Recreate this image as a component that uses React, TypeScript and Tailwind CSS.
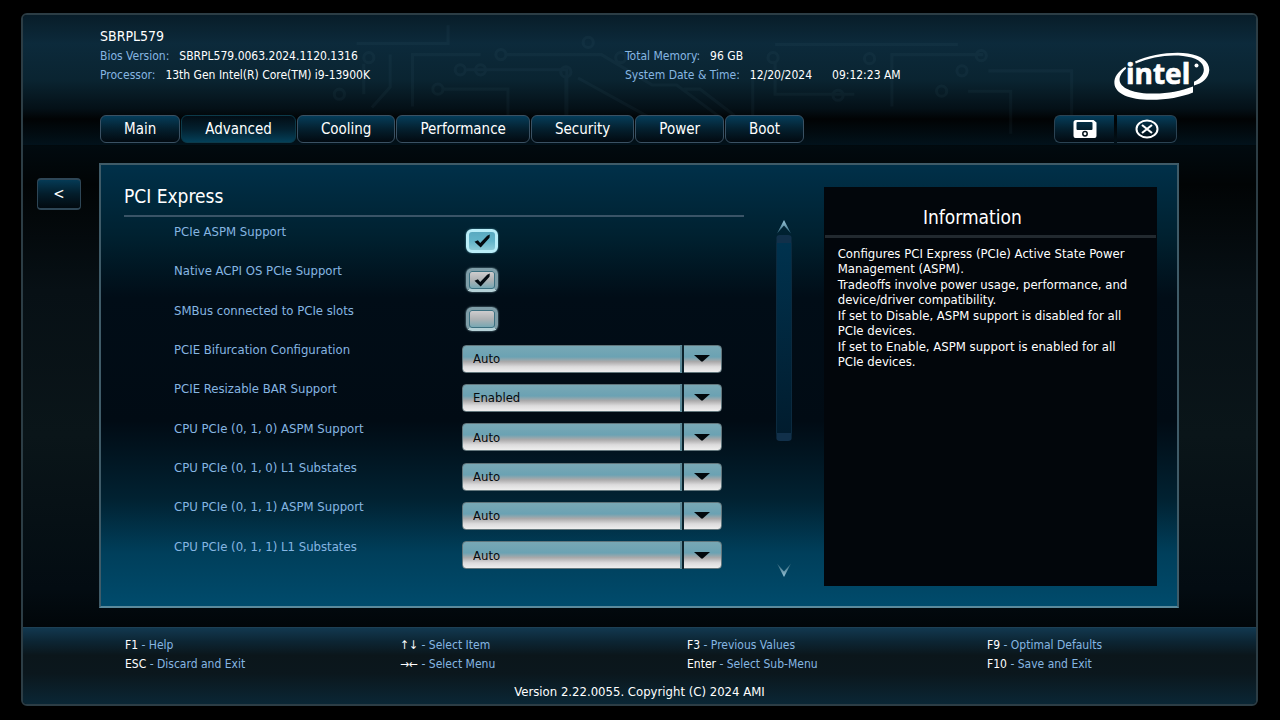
import React, { useState } from 'react';

interface CheckRow {
  id: string;
  label: string;
  kind: 'check';
  checked: boolean;
  active?: boolean;
}

interface SelectRow {
  id: string;
  label: string;
  kind: 'select';
  value: string;
}

type Row = CheckRow | SelectRow;

const TABS = ['Main', 'Advanced', 'Cooling', 'Performance', 'Security', 'Power', 'Boot'];

const ROWS: Row[] = [
  { id: 'aspm', label: 'PCIe ASPM Support', kind: 'check', checked: true, active: true },
  { id: 'acpi', label: 'Native ACPI OS PCIe Support', kind: 'check', checked: true },
  { id: 'smbus', label: 'SMBus connected to PCIe slots', kind: 'check', checked: false },
  { id: 'bifurcation', label: 'PCIE Bifurcation Configuration', kind: 'select', value: 'Auto' },
  { id: 'bar', label: 'PCIE Resizable BAR Support', kind: 'select', value: 'Enabled' },
  { id: 'cpu010-aspm', label: 'CPU PCIe (0, 1, 0) ASPM Support', kind: 'select', value: 'Auto' },
  { id: 'cpu010-l1', label: 'CPU PCIe (0, 1, 0) L1 Substates', kind: 'select', value: 'Auto' },
  { id: 'cpu011-aspm', label: 'CPU PCIe (0, 1, 1) ASPM Support', kind: 'select', value: 'Auto' },
  { id: 'cpu011-l1', label: 'CPU PCIe (0, 1, 1) L1 Substates', kind: 'select', value: 'Auto' },
];

const HELP = [
  'Configures PCI Express (PCIe) Active State Power Management (ASPM).',
  'Tradeoffs involve power usage, performance, and device/driver compatibility.',
  'If set to Disable, ASPM support is disabled for all PCIe devices.',
  'If set to Enable, ASPM support is enabled for all PCIe devices.',
];

const KEYS = [
  [['F1', 'Help'], ['ESC', 'Discard and Exit']],
  [['↑↓', 'Select Item'], ['→←', 'Select Menu']],
  [['F3', 'Previous Values'], ['Enter', 'Select Sub-Menu']],
  [['F9', 'Optimal Defaults'], ['F10', 'Save and Exit']],
];

const IntelLogo: React.FC = () => (
  <svg width="96" height="48" viewBox="0 0 96 48" fill="#fff" role="img" aria-label="intel">
    <path d="M21 9.600C36 2.500 58-.6 74 1.400c14 1.900 22 8.600 21.200 17.400C94.500 26.500 88 31.500 80 33.500v-3.800c5.500-2.600 9.500-6.700 9.800-11.500C90.300 9.800 82 5.400 69 3.900 54 2.300 37 4.800 21.800 11.600z" />
    <path d="M11.500 14.800C4 19.500 0 25.300.4 31.200.9 41.500 15 47.800 37 47.800c16 0 30.500-2.600 42-7.300v-5.900C67 39.200 54 41.600 41 41.600 20.500 41.800 7.500 36.500 5.800 29.400c-.9-4 1.200-8.400 6.200-12.600z" />
    <text
      x="12"
      y="32"
      fontFamily="Open Sans, Noto Sans, sans-serif"
      fontWeight="700"
      fontSize="28"
      stroke="#fff"
      strokeWidth="0.700"
    >
      intel
    </text>
    <circle cx="82.500" cy="13.500" r="2" />
  </svg>
);

// Faint board traces behind the header text
const Circuit: React.FC = () => (
  <svg
    className="pointer-events-none absolute inset-0 h-full w-full opacity-5"
    viewBox="0 0 1233 128"
    preserveAspectRatio="xMidYMin slice"
    fill="none"
    stroke="#6fa0b4"
    strokeWidth="3"
    aria-hidden="true"
  >
    <path d="M371 39v32l-18 20M393 90V39h67M485 39h94l50 30h24l46 34M446 54h99v58M424 73h63v38M544 62v48M556 62l76 42M660 73h16l34 26M728 110V60M750 46v32h78M865 90V39h90M960 55h82v58M940 75h42v42" />
    <path d="M428 10v18h-90M750 29h180M345 78v-30" />
    <circle cx="460" cy="54" r="5" />
    <circle cx="418" cy="73" r="5" />
    <circle cx="440" cy="54" r="5" />
    <circle cx="480" cy="39" r="5" />
    <circle cx="544" cy="56" r="5" />
    <circle cx="566" cy="27" r="5" />
    <circle cx="598" cy="42" r="5" />
    <circle cx="321" cy="78" r="5" />
    <circle cx="350" cy="42" r="5" />
    <circle cx="748" cy="42" r="5" />
    <circle cx="812" cy="79" r="5" />
    <circle cx="843" cy="43" r="5" />
    <circle cx="953" cy="40" r="5" />
    <circle cx="934" cy="55" r="5" />
    <circle cx="914" cy="75" r="5" />
  </svg>
);

const Checkbox: React.FC<{ row: CheckRow }> = ({ row }) => {
  const [checked, setChecked] = useState(row.checked);
  return (
    <div className="relative ml-1 h-6 w-8">
      <input
        id={row.id}
        type="checkbox"
        checked={checked}
        onChange={(e) => setChecked(e.target.checked)}
        className={`block h-6 w-8 appearance-none rounded-md border-3 outline-none ${
          row.active
            ? 'border-[#b9edf8] bg-linear-to-b from-[#5aa9c0] via-[#62b4c9] to-[#8ccbd8] shadow-[0_0_2px_#4d93a5]'
            : 'border-[#7f9ea8] border-b-[#b4d0d6] bg-linear-to-b from-[#d2d0d1] via-[#aeb2b4] to-[#6fa6b3] shadow-[0_0_2px_#8fb0b8,inset_0_0_0_1px_#3c7080]'
        }`}
      />
      {checked && (
        <svg className="pointer-events-none absolute inset-0" width="32" height="24" viewBox="0 0 32 24" aria-hidden="true">
          <path d="M8.500 12.800l3.400-1.600 2.300 2.800 7-7.300 2.600-1.200-.3 3.200-8.800 9.800z" fill="#020a10" />
        </svg>
      )}
    </div>
  );
};

const Dropdown: React.FC<{ row: SelectRow }> = ({ row }) => {
  const [value, setValue] = useState(row.value);
  return (
    <div className="relative h-7 w-[260px]">
      <select
        id={row.id}
        value={value}
        onChange={(e) => setValue(e.target.value)}
        className="block h-7 w-full appearance-none rounded border border-[#62767c] bg-[linear-gradient(to_bottom,#78a8b5_0%,#6ba2b3_42%,#aaa9aa_60%,#dcdbdc_80%,#eeeeee_100%)] pl-[10px] text-[13px] text-[#050b0e] outline-none"
      >
        <option>Auto</option>
        <option>Enabled</option>
        <option>Disabled</option>
      </select>
      <div className="pointer-events-none absolute inset-y-0 right-0 flex w-[42px] items-center justify-center border-l-2 border-[#5c8a98] shadow-[inset_2px_0_0_#0c222b]">
        <svg width="16" height="7" viewBox="0 0 16 7" fill="#02080c" aria-hidden="true">
          <path d="M0 0h16L9 6.300q-1 .7-2 0z" />
        </svg>
      </div>
    </div>
  );
};

const NavTab: React.FC<{ label: string; active: boolean; onClick: () => void }> = ({ label, active, onClick }) => (
  <button
    onClick={onClick}
    className={`h-7 rounded-md border px-[23px] text-[15px] leading-5 text-white ${
      active
        ? 'border-[#0c3a4a] bg-linear-to-b from-[#020d15] via-[#03202f] to-[#044059]'
        : 'border-[#3a5163] bg-linear-to-b from-[#053d5a] via-[#04202f] to-[#020a11]'
    }`}
  >
    {label}
  </button>
);

const Arrow: React.FC<{ down?: boolean }> = ({ down }) => (
  <svg width="14" height="14" viewBox="0 0 14 14" className={down ? 'rotate-180' : ''} aria-hidden="true">
    <defs>
      <linearGradient id={down ? 'arrow-down' : 'arrow-up'} x1="0" y1="0" x2="0" y2="1">
        <stop offset="0" stopColor="#9cc9dc" />
        <stop offset="1" stopColor="#2c5f74" />
      </linearGradient>
    </defs>
    <path d="M7 0L14 13.500 7 5.500 0 13.500z" fill={down ? 'url(#arrow-down)' : 'url(#arrow-up)'} />
  </svg>
);

export default function App() {
  const [tab, setTab] = useState('Advanced');

  return (
    <div className="flex min-h-screen flex-col bg-black pt-[13px] pr-[22px] pb-[14px] pl-[21px] font-['DejaVu_Sans_Condensed','DejaVu_Sans',sans-serif] text-white">
      <div className="flex flex-1 flex-col overflow-hidden rounded-md border-2 border-[#2c3d45] bg-[#02070a]">
        {/* Header */}
        <header className="relative border-b border-[#01090d] bg-[linear-gradient(to_bottom,#081d29_0%,#0c2a3b_22%,#0a2431_50%,#041017_72%,#010304_80%,#02121b_100%)] pt-[11px] pl-[77px]">
          <Circuit />
          <div className="relative flex items-start pr-[46px]">
            <div className="grid h-[89px] flex-1 grid-cols-[525fr_489fr] text-xs leading-[19px]">
              <div>
                <h1 className="text-sm leading-[21px]">SBRPL579</h1>
                <p>
                  <span className="mr-[10px] text-[#86b6e2]">Bios Version:</span>
                  SBRPL579.0063.2024.1120.1316
                </p>
                <p>
                  <span className="mr-[10px] text-[#86b6e2]">Processor:</span>
                  13th Gen Intel(R) Core(TM) i9-13900K
                </p>
              </div>
              <div className="pt-[21px]">
                <p>
                  <span className="mr-[10px] text-[#86b6e2]">Total Memory:</span>
                  96 GB
                </p>
                <p>
                  <span className="mr-[10px] text-[#86b6e2]">System Date &amp; Time:</span>
                  <span className="mr-5">12/20/2024</span>
                  09:12:23 AM
                </p>
              </div>
            </div>
            <div className="pt-[26px]">
              <IntelLogo />
            </div>
          </div>
          <div className="relative flex items-center justify-between pr-[79px] pb-[2px]">
            <nav className="flex gap-px">
              {TABS.map((label) => (
                <NavTab key={label} label={label} active={label === tab} onClick={() => setTab(label)} />
              ))}
            </nav>
            <div className="flex gap-[3px]">
              <button
                aria-label="Save"
                className="flex h-7 w-[60px] items-center justify-center rounded-l-md border border-r-0 border-[#2b4353] bg-linear-to-b from-[#053d5a] via-[#04202f] to-[#020a11]"
              >
                <svg width="24" height="18" viewBox="0 0 24 18" aria-hidden="true">
                  <path
                    fill="#fff"
                    fillRule="evenodd"
                    d="M3 0h17.500L23.500 2.500V16q0 2-2 2h-19q-2 0-2-2V2.500Q.5 0 3 0zM4.500 2q-1 0-1 1v6q0 1 1 1h14q1 0 1-1V3q0-1-1-1z"
                  />
                  <circle cx="12" cy="13.700" r="2.200" fill="#fff" stroke="#04121b" strokeWidth="1.500" />
                </svg>
              </button>
              <button
                aria-label="Exit"
                className="flex h-7 w-[60px] items-center justify-center rounded-r-md border border-l-0 border-[#2b4353] bg-linear-to-b from-[#053d5a] via-[#04202f] to-[#020a11]"
              >
                <svg width="24" height="20" viewBox="0 0 24 20" fill="none" stroke="#fff" strokeWidth="2" aria-hidden="true">
                  <ellipse cx="12" cy="10" rx="10.500" ry="8.500" />
                  <path d="M7 6l10 8M17 6L7 14" strokeWidth="2.200" />
                </svg>
              </button>
            </div>
          </div>
        </header>

        {/* Body */}
        <main className="flex flex-1 bg-[linear-gradient(to_bottom,#010a0f_0%,#010405_8%,#071015_30%,#0a1519_60%,#030c12_92%,#010609_100%)] pt-[17px] pr-[77px] pb-[19px] pl-[14px]">
          <button
            aria-label="Back"
            className="mt-[15px] mr-[18px] h-8 w-11 rounded border-y-2 border-x border-[#2e4656] bg-linear-to-b from-[#053a55] via-[#031d2b] to-[#020a10] text-[15px] leading-5"
          >
            &lt;
          </button>

          <section className="flex flex-1 gap-8 border-2 border-[#3f5b68] border-b-[#5b8a9c] bg-[linear-gradient(to_bottom,#003049_0%,#002130_16%,#010d17_30%,#010b14_58%,#012232_76%,#003f5b_88%,#004b6c_100%)] pt-5 pr-5 pb-5 pl-[23px]">
            <div className="flex flex-[621] flex-col">
              <h2 className="h-8 border-b-2 border-[#3a5467] text-[19px] leading-[22px]">PCI Express</h2>
              <div className="mt-1 mb-[11px] grid flex-1 auto-rows-fr">
                {ROWS.map((row) => (
                  <div key={row.id} className="grid grid-cols-[288px_1fr] items-center pl-[50px]">
                    <label htmlFor={row.id} className="self-start text-[13px] leading-[22px] text-[#86b6e2]">
                      {row.label}
                    </label>
                    {row.kind === 'check' ? <Checkbox row={row} /> : <Dropdown row={row} />}
                  </div>
                ))}
              </div>
            </div>

            <div className="flex w-4 flex-col items-center pt-[34px] pb-2">
              <button aria-label="Scroll up" className="h-4">
                <Arrow />
              </button>
              <div className="w-4 flex-1">
                <div className="h-[63%] w-full rounded-sm border-x border-t-8 border-b-8 border-x-[#0b2a3f] border-y-[#11304a] bg-linear-to-b from-[#00324e] to-[#011c2e]" />
              </div>
              <button aria-label="Scroll down" className="h-4">
                <Arrow down />
              </button>
            </div>

            <aside className="mt-[2px] flex-[334] bg-[#02060b]">
              <h2 className="mx-px border-b-3 border-[#22292f] pt-[18px] pr-9 pb-[6px] text-center text-[19px] leading-6">
                Information
              </h2>
              <div className="flex flex-col gap-px pt-2 pr-6 pl-[14px] text-[13px] leading-[15px]">
                {HELP.map((text) => (
                  <p key={text}>{text}</p>
                ))}
              </div>
            </aside>
          </section>
        </main>

        {/* Footer */}
        <footer className="border-t border-[#1d4055] bg-[linear-gradient(to_bottom,#12384f_0%,#0c2533_18%,#0b161b_36%,#0b171d_60%,#0a2635_100%)] pt-2 pb-[2px] text-xs">
          <div className="grid grid-cols-[275fr_287fr_300fr_269fr] pl-[102px] leading-[19px]">
            {KEYS.map((group) => (
              <ul key={group[0][0]}>
                {group.map(([key, action]) => (
                  <li key={key} className="text-[#86b6e2]">
                    <span className="text-white">{key}</span> - {action}
                  </li>
                ))}
              </ul>
            ))}
          </div>
          <p className="mt-2 text-center text-[13px] leading-5">Version 2.22.0055. Copyright (C) 2024 AMI</p>
        </footer>
      </div>
    </div>
  );
}
